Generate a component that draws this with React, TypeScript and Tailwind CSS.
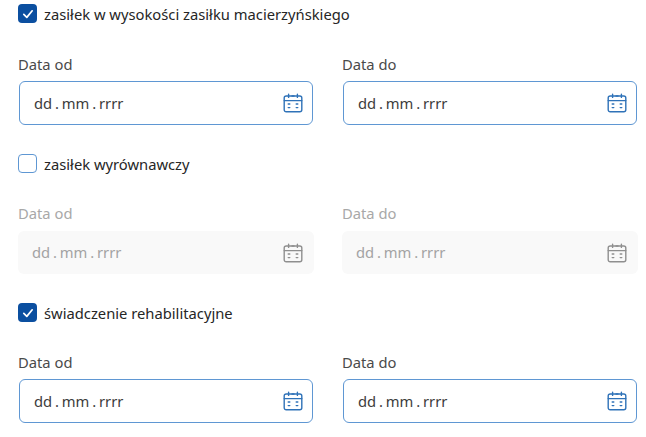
import React from 'react';

const CalendarIcon = ({ disabled }: { disabled?: boolean }) => (
    <svg
        width="20"
        height="20"
        viewBox="0 0 20 20"
        fill="none"
        stroke={disabled ? '#8f8f8f' : '#2f72b8'}
        strokeWidth="1.4"
        strokeLinecap="round"
        strokeLinejoin="round"
    >
        <rect x="1.2" y="3" width="17.6" height="15.8" rx="2" />
        <path d="M1.2 7.6H18.8" />
        <path d="M5.6 1.2V4.4M14.4 1.2V4.4M9 3H11" />
        <path d="M5.2 11H6.8M13.2 11H14.8M5.2 14.6H6.8M13.2 14.6H14.8" />
    </svg>
);

const DateField = ({ label, disabled }: { label: string; disabled?: boolean }) => (
    <div className="flex-1">
        <div className={`h-[18px] text-[14.75px] leading-[18px] ${disabled ? 'text-[#a8a8a8]' : 'text-[#4a4a4a]'}`}>
            {label}
        </div>
        {disabled ? (
            <div className="mt-[9px] mr-[-1px] flex h-[43px] items-center justify-between rounded-[6px] bg-[#f9f9f9] pl-[14px] pr-[11px] text-[14.75px] text-[#a3a3a3] [word-spacing:-1px]">
                <span>dd . mm . rrrr</span>
                <CalendarIcon disabled />
            </div>
        ) : (
            <div className="mt-[8px] ml-[1px] flex h-[44px] items-center justify-between rounded-[6px] border border-[#5f97d3] pl-[14px] pr-[9px] text-[14.75px] text-[#3c3c3c] [word-spacing:-1px]">
                <span>dd . mm . rrrr</span>
                <CalendarIcon />
            </div>
        )}
    </div>
);

const Section = ({ label, checked, disabled, tight }: { label: string; checked?: boolean; disabled?: boolean; tight?: boolean }) => (
    <div>
        <div className="flex h-[19px] items-center gap-[7px]">
            {checked ? (
                <div className="flex h-[19px] w-[19px] items-center justify-center rounded-[4px] bg-[#0b4fa0]">
                    <svg width="12" height="12" viewBox="0 0 12 12" fill="none" stroke="#ffffff" strokeWidth="1.7" strokeLinecap="round" strokeLinejoin="round">
                        <path d="M1.8 6.4L4.8 9.4L10.2 2.8" />
                    </svg>
                </div>
            ) : (
                <div className="h-[19px] w-[19px] rounded-[4px] border border-[#5f97d3] bg-white" />
            )}
            <span className="text-[14.75px] leading-[18px] text-[#262626]">{label}</span>
        </div>
        <div className={`flex gap-[29px] ${tight ? 'mt-[31px]' : 'mt-[32px]'}`}>
            <DateField label="Data od" disabled={disabled} />
            <DateField label="Data do" disabled={disabled} />
        </div>
    </div>
);

export default function App() {
    return (
        <div className="h-[437px] w-[646px] overflow-hidden bg-white pl-[18px] pr-[9px] pt-[4px] font-['Noto_Sans',sans-serif]">
            <div className="flex flex-col gap-[29px]">
                <Section label="zasiłek w wysokości zasiłku macierzyńskiego" checked />
                <Section label="zasiłek wyrównawczy" disabled tight />
                <Section label="świadczenie rehabilitacyjne" checked tight />
            </div>
        </div>
    );
}
